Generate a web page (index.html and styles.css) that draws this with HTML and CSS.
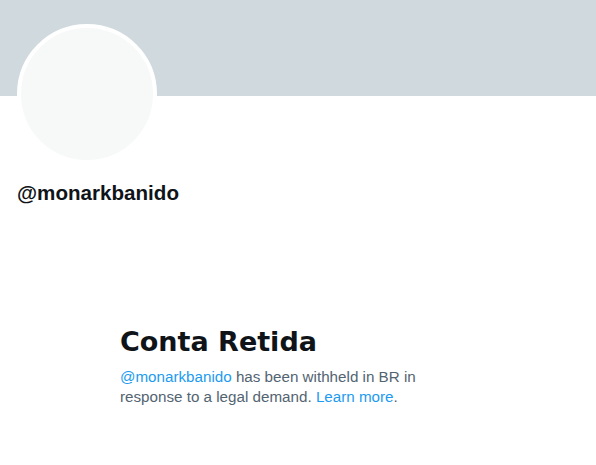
FILE: index.html
```html
<!DOCTYPE html>
<html lang="pt">
<head>
<meta charset="utf-8">
<title>@monarkbanido</title>
<link rel="stylesheet" href="styles.css">
</head>
<body>
<div class="profile">
  <div class="banner"></div>
  <div class="head">
    <div class="avatar"></div>
    <div class="handle">@monarkbanido</div>
  </div>
  <div class="notice">
    <h1 class="title">Conta Retida</h1>
    <p class="desc"><a class="link" href="#">@monarkbanido</a> has been withheld in BR in response to a legal demand. <a class="link" href="#">Learn more</a>.</p>
  </div>
</div>
</body>
</html>
```
FILE: styles.css
```css
html, body {
  margin: 0;
  padding: 0;
  background: #ffffff;
}
body {
  font-family: "Liberation Sans", Arial, sans-serif;
  color: #0f1419;
}
.profile {
  width: 596px;
}
.banner {
  height: 96px;
  background: #cfd9de;
}
.head {
  padding: 0 0 0 17px;
  display: flex;
  flex-direction: column;
  align-items: flex-start;
}
.avatar {
  width: 132px;
  height: 132px;
  margin-top: -72px;
  border: 4px solid #ffffff;
  border-radius: 50%;
  background: #f7f9f9;
}
.handle {
  margin-top: 17px;
  font-size: 20.6px;
  font-weight: 700;
  line-height: 24px;
  color: #0f1419;
}
.notice {
  padding: 119px 0 0 120px;
  width: 330px;
}
.title {
  margin: 0;
  font-family: "DejaVu Sans", sans-serif;
  font-size: 27px;
  font-weight: 700;
  line-height: 36px;
  color: #0f1419;
}
.desc {
  margin: 7px 0 0;
  font-size: 15.2px;
  line-height: 20px;
  color: #536471;
}
.link {
  color: #1d9bf0;
  text-decoration: none;
}
```
